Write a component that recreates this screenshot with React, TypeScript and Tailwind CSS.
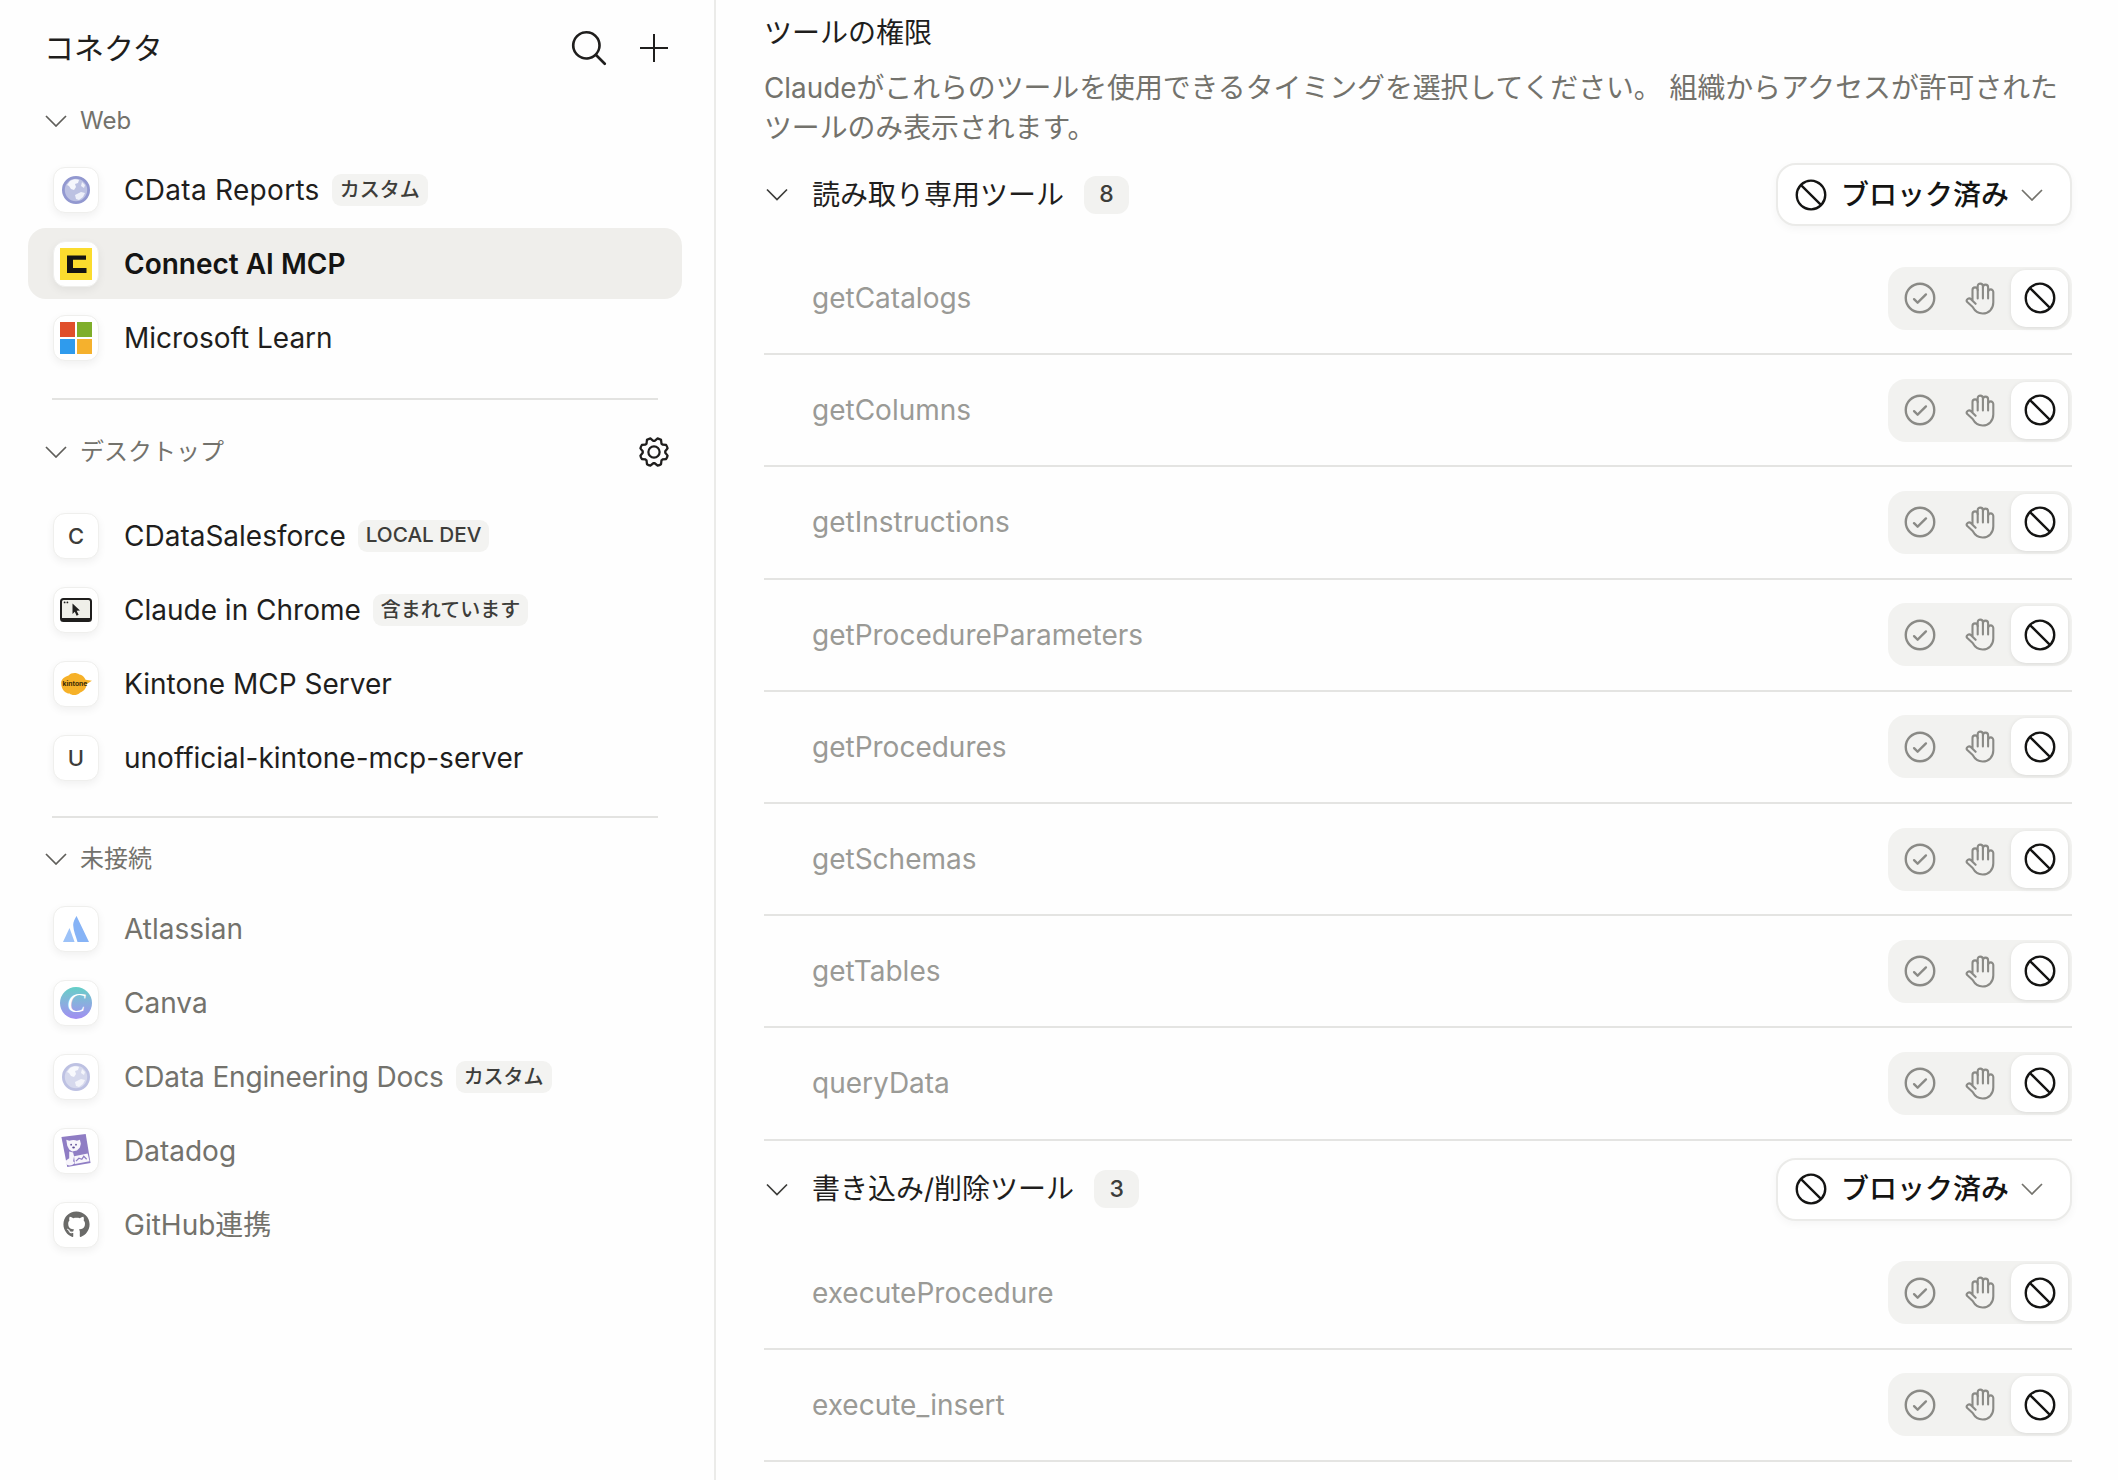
import React from "react";
import { FaGithub } from "react-icons/fa";
import { PiCheckCircle, PiGear, PiMagnifyingGlass, PiProhibit } from "react-icons/pi";

const Chevron = ({ className }: { className?: string }) => (
  <svg viewBox="0 0 22 12" fill="none" stroke="currentColor" strokeWidth="1.7" className={className}>
    <path d="M1 1l10 10L21 1" />
  </svg>
);

const HandIcon = ({ className }: { className?: string }) => (
  <svg viewBox="0 0 30 33" fill="none" stroke="currentColor" strokeWidth="2.1" strokeLinecap="round" strokeLinejoin="round" className={className}>
    <path d="M7.5 18V8a2.6 2.6 0 0 1 5.2 0V4.2a2.6 2.6 0 0 1 5.2 0v1a2.6 2.6 0 0 1 5.2 0V10a2.6 2.6 0 0 1 5.2 0v10.5c0 6.5-4.6 11-10.6 11-4.6 0-7.6-2-10-6.5L2 19.8c-1.4-2.6 2.2-4.6 4-2.6l4.6 4.6" />
    <path d="M12.7 8v8.5M17.9 5.2v11.3M23.1 10v6.5" />
  </svg>
);

const Globe = () => (
  <svg viewBox="0 0 30 30" className="h-[30px] w-[30px] blur-[0.5px]">
    <circle cx="15" cy="15" r="12.6" fill="#bcc1e2" stroke="#9298d0" strokeWidth="2.8" />
    <path d="M9 6c3-2 7-2 9-1l-1 3-3 1 1 3-2 3-3-1-2-3-2-1z" fill="#f5f6fc" />
    <path d="M14 20l6-3 4 1-2 4-4 3-3-1z" fill="#eef0fa" />
    <path d="M21 7l3 3-1 3-3-2z" fill="#eef0fa" />
  </svg>
);

const ConnectLogo = () => (
  <svg viewBox="0 0 32 32" className="h-8 w-8">
    <rect width="32" height="32" fill="#fbdc2e" />
    <path d="M7 7.5h19v4.2H13v8.2h13.5V25H7z" fill="#141413" />
  </svg>
);

const MsLogo = () => (
  <div className="grid h-8 w-8 grid-cols-2 gap-[2px]">
    <div className="bg-[#e04f2b]" />
    <div className="bg-[#7fae2a]" />
    <div className="bg-[#2f9bed]" />
    <div className="bg-[#f5b12d]" />
  </div>
);

const ChromeLogo = () => (
  <svg viewBox="0 0 32 24" className="h-6 w-8">
    <rect x="1" y="1" width="30" height="22" rx="2.5" fill="#efefe9" stroke="#1f1e1d" strokeWidth="2" />
    <rect x="1" y="20" width="30" height="3" fill="#1f1e1d" />
    <circle cx="4.6" cy="4.4" r="0.9" fill="#1f1e1d" />
    <circle cx="7.4" cy="4.4" r="0.9" fill="#1f1e1d" />
    <path d="M12.5 5.5l7.5 7-3.3.3 1.9 4-2 .9-1.8-4-2.3 2.2z" fill="#1f1e1d" />
  </svg>
);

const KintoneLogo = () => (
  <svg viewBox="0 0 32 24" className="h-[26px] w-[34px]">
    <path d="M2 11c0-4 4-6 7-7 2-3 8-3 10-1 2 0 5 2 6 5l6 1-5 3c0 4-3 7-6 8-3 3-8 3-10 1-4 0-8-4-8-10z" fill="#f6b128" />
    <text x="15" y="14" textAnchor="middle" fontSize="6.4" fontWeight="700" fill="#3a2a05" fontFamily="Inter, sans-serif">kintone</text>
  </svg>
);

const AtlassianLogo = () => (
  <svg viewBox="0 0 24 24" className="h-[26px] w-[26px]">
    <path d="M12.5 0l11.5 24H13.4C12 19 9.6 14 9.4 8.4 9.4 5.4 10.8 2.6 12.5 0z" fill="#86b3f6" />
    <path d="M6 11l4.7 13H0z" fill="#9cc2f8" />
  </svg>
);

const CanvaLogo = () => (
  <div className="flex h-8 w-8 items-center justify-center rounded-full bg-gradient-to-b from-[#62cfc6] to-[#a08cf2]">
    <span className="font-['Liberation_Serif',serif] text-[28px] italic leading-none text-white">C</span>
  </div>
);

const DatadogLogo = () => (
  <svg viewBox="0 0 32 34" className="h-[33px] w-8">
    <path d="M1 3l25-3 5 30-24 4z" fill="#8f7dc4" />
    <path d="M6 6l3 1c3-1 6-1 8 0l3-1 1 4-1 4-3 3-5 1-3-2-2-4z" fill="#f7f5fb" />
    <path d="M9 18l4 1 1 4-1 5 2 2-3 2c-3 1-6 0-7-2l1-3 3-2z" fill="#f7f5fb" />
    <path d="M14 23l14-3 2 8-15 3z" fill="#f7f5fb" />
    <path d="M16 28l3-3 3 1 2-3 3 3" fill="none" stroke="#8f7dc4" strokeWidth="1.3" />
    <circle cx="11" cy="11" r="0.9" fill="#5b4a94" />
    <circle cx="16" cy="11" r="0.9" fill="#5b4a94" />
    <ellipse cx="13.5" cy="14" rx="1.4" ry="1" fill="#5b4a94" />
  </svg>
);

type Item = {
  name: string;
  icon: React.ReactNode;
  badge?: string;
  active?: boolean;
  nameClass?: string;
  badgeClass?: string;
};

const letter = (c: string) => (
  <span className="text-[22px] font-medium leading-none text-[#3d3d3a]">{c}</span>
);

const web: Item[] = [
  { name: "CData Reports", icon: <Globe />, badge: "カスタム", nameClass: "tracking-[0.3px]", badgeClass: "text-[20px]" },
  { name: "Connect AI MCP", icon: <ConnectLogo />, active: true },
  { name: "Microsoft Learn", icon: <MsLogo /> },
];
const desktop: Item[] = [
  { name: "CDataSalesforce", icon: letter("C"), badge: "LOCAL DEV", badgeClass: "text-[20.7px]" },
  { name: "Claude in Chrome", icon: <ChromeLogo />, badge: "含まれています", badgeClass: "text-[20px]" },
  { name: "Kintone MCP Server", icon: <KintoneLogo /> },
  { name: "unofficial-kintone-mcp-server", icon: letter("U") },
];
const off: Item[] = [
  { name: "Atlassian", icon: <AtlassianLogo /> },
  { name: "Canva", icon: <CanvaLogo /> },
  {
    name: "CData Engineering Docs",
    icon: (
      <div className="opacity-60">
        <Globe />
      </div>
    ),
    badge: "カスタム",
    nameClass: "tracking-[-0.15px]",
    badgeClass: "text-[20px]",
  },
  { name: "Datadog", icon: <DatadogLogo /> },
  { name: "GitHub連携", icon: <FaGithub className="h-[27px] w-[27px] text-[#6a6a68]" /> },
];

function Row({ item, dim }: { item: Item; dim?: boolean }) {
  return (
    <div
      className={`flex h-[71px] items-center rounded-[18px] pl-[25px] ${item.active ? "bg-[#efeeeb]" : ""}`}
    >
      <div className="flex h-[46px] w-[46px] shrink-0 items-center justify-center rounded-[12px] border border-[#efefed] bg-white shadow-[0_3px_8px_rgba(0,0,0,0.06)]">
        {item.icon}
      </div>
      <span
        className={`ml-[25px] whitespace-nowrap text-[28px] leading-none ${
          item.active ? "font-semibold text-[#141413]" : dim ? "text-[#73726c]" : "text-[#1f1e1d]"
        } ${item.nameClass ?? ""}`}
      >
        {item.name}
      </span>
      {item.badge && (
        <span
          className={`ml-[12px] flex h-[32px] items-center whitespace-nowrap rounded-[9px] bg-[#f3f3f1] px-[8px] font-medium leading-none text-[#3d3d3a] ${
            item.badgeClass ?? ""
          }`}
        >
          {item.badge}
        </span>
      )}
    </div>
  );
}

function SectionHead({ label, children }: { label: string; children?: React.ReactNode }) {
  return (
    <div className="flex h-10 items-center pl-[17px] pr-[14px]">
      <Chevron className="h-[12px] w-[22px] text-[#5f5e5a]" />
      <span className="ml-[13px] text-[24px] leading-none text-[#73726c]">{label}</span>
      {children}
    </div>
  );
}

const tools1 = [
  "getCatalogs",
  "getColumns",
  "getInstructions",
  "getProcedureParameters",
  "getProcedures",
  "getSchemas",
  "getTables",
  "queryData",
];
const tools2 = ["executeProcedure", "execute_insert"];

function ToolGroup({
  label,
  count,
  tools,
  className,
}: {
  label: string;
  count: number;
  tools: string[];
  className?: string;
}) {
  return (
    <div className={className}>
      <div className="flex h-[63px] items-center">
        <Chevron className="ml-[2px] h-[13px] w-[22px] text-[#3d3d3a]" />
        <span className="ml-[24px] text-[28px] leading-none text-[#1f1e1d]">{label}</span>
        <span className="ml-[20px] flex h-[38px] w-[45px] items-center justify-center rounded-[12px] bg-[#f2f2f0] text-[23px] font-medium leading-none text-[#3d3d3a]">
          {count}
        </span>
        <button className="ml-auto flex h-[63px] w-[296px] items-center rounded-[20px] border-2 border-[#ebebe9] bg-white pl-[14px] shadow-[0_3px_8px_rgba(0,0,0,0.04)]">
          <PiProhibit className="h-[38px] w-[38px] text-[#141413]" />
          <span className="ml-[11px] text-[28px] font-medium leading-none text-[#141413]">ブロック済み</span>
          <Chevron className="ml-[12px] h-[12px] w-[22px] text-[#73726c]" />
        </button>
      </div>
      <div className="mt-[17px]">
        {tools.map((t) => (
          <div key={t} className="flex h-[112.2px] items-center justify-between border-b-2 border-[#e4e4e2] pl-[48px]">
            <span className="text-[28px] leading-none text-[#9a9a96]">{t}</span>
            <div className="flex h-[63px] items-center gap-[3px] rounded-[18px] bg-[#f2f2f0] py-[3px] pl-[3px] pr-[4px]">
              <div className="flex h-[57px] w-[57px] items-center justify-center">
                <PiCheckCircle className="h-[38px] w-[38px] text-[#8a8a86]" />
              </div>
              <div className="flex h-[57px] w-[57px] items-center justify-center">
                <HandIcon className="h-[33px] w-[30px] text-[#8a8a86]" />
              </div>
              <div className="flex h-[57px] w-[57px] items-center justify-center rounded-[15px] bg-white shadow-[0_1px_4px_rgba(0,0,0,0.1)]">
                <PiProhibit className="h-[38px] w-[38px] text-[#141413]" />
              </div>
            </div>
          </div>
        ))}
      </div>
    </div>
  );
}

export default function App() {
  return (
    <div className="flex h-[1480px] w-[2118px] overflow-hidden bg-[#fefefe] font-['Inter','Noto_Sans_CJK_JP',sans-serif]">
      <aside className="w-[716px] shrink-0 border-r-2 border-[#ebebe9] pl-[28px] pr-[32px] pt-[28px]">
        <div className="flex h-10 items-center pl-[16px] pr-[14px]">
          <h1 className="text-[30px] font-normal leading-none text-[#1f1e1d]">コネクタ</h1>
          <PiMagnifyingGlass className="ml-auto h-[42px] w-[42px] text-[#1f1e1d]" />
          <svg viewBox="0 0 28 28" className="ml-[30px] h-7 w-7" stroke="#1f1e1d" strokeWidth="2">
            <path d="M14 0v28M0 14h28" />
          </svg>
        </div>
        <div className="mt-[33px]">
          <SectionHead label="Web" />
          <div className="mt-[13px] flex flex-col gap-[3px]">
            {web.map((i) => (
              <Row key={i.name} item={i} />
            ))}
          </div>
        </div>
        <div className="ml-[24px] mr-[24px] mt-[25px] h-[2px] bg-[#e3e3e1]" />
        <div className="mt-[32px]">
          <SectionHead label="デスクトップ">
            <PiGear className="ml-auto mr-[-4px] h-9 w-9 text-[#1f1e1d]" />
          </SectionHead>
          <div className="mt-[28px] flex flex-col gap-[3px]">
            {desktop.map((i) => (
              <Row key={i.name} item={i} />
            ))}
          </div>
        </div>
        <div className="ml-[24px] mr-[24px] mt-[23px] h-[2px] bg-[#e3e3e1]" />
        <div className="mt-[21px]">
          <SectionHead label="未接続" />
          <div className="mt-[14px] flex flex-col gap-[3px]">
            {off.map((i) => (
              <Row key={i.name} item={i} dim />
            ))}
          </div>
        </div>
      </aside>
      <main className="flex-1 pl-[48px] pr-[46px] pt-[13px]">
        <h2 className="flex h-10 items-center text-[28px] font-normal leading-none text-[#1f1e1d]">ツールの権限</h2>
        <p className="mt-[15px] text-[27.85px] leading-[40px] text-[#73726c]">
          Claudeがこれらのツールを使用できるタイミングを選択してください。 組織からアクセスが許可されたツールのみ表示されます。
        </p>
        <ToolGroup className="mt-[15px]" label="読み取り専用ツール" count={8} tools={tools1} />
        <ToolGroup className="mt-[17px]" label="書き込み/削除ツール" count={3} tools={tools2} />
      </main>
    </div>
  );
}
